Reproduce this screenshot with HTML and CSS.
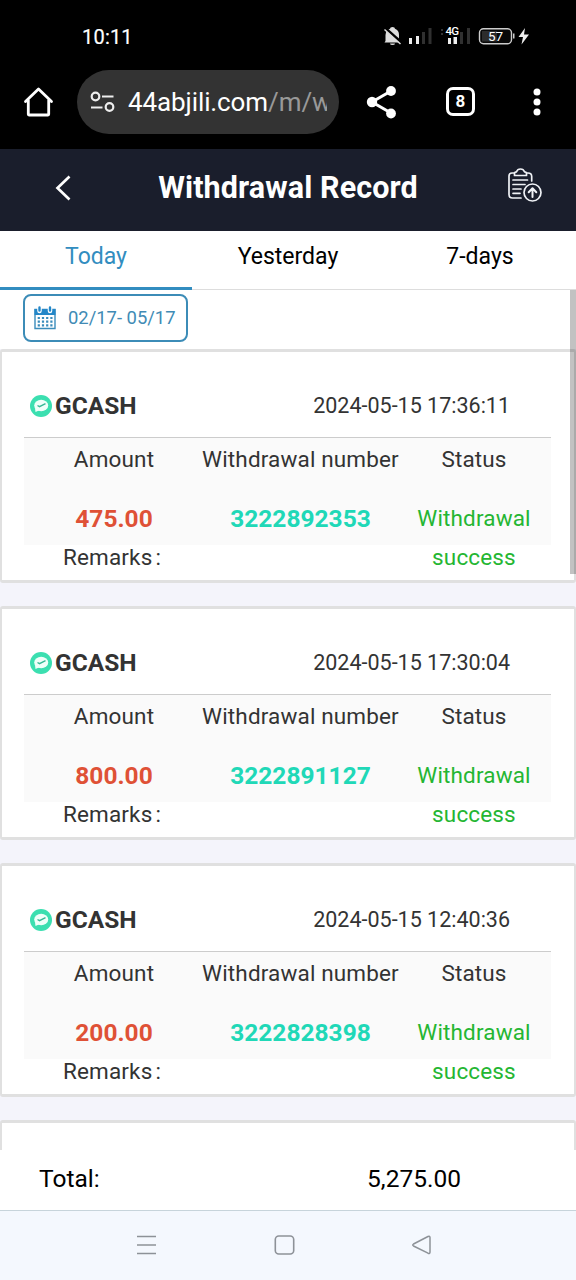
FILE: index.html
```
<!DOCTYPE html>
<html lang="en">
<head>
<meta charset="utf-8">
<title>Withdrawal Record</title>
<link rel="stylesheet" href="styles.css">
</head>
<body>
<div class="status-bar">
  <span class="clock">10:11</span>
  <svg class="status-icons" width="150" height="24" viewBox="0 0 150 24">
    <path d="M4.500 17V11Q5 5.500 9 4.700Q9 3 11.500 3Q14 3 14 4.700Q18 6 18 11V15L20 18.500H3.500Z" fill="#ddd"/>
    <path d="M9 19.500H14Q14 21 11.500 21Q9 21 9 19.500Z" fill="#ddd"/>
    <path d="M3.500 3.500L21 19" stroke="#000" stroke-width="3"/>
    <path d="M3.500 5.500L19.500 20" stroke="#ddd" stroke-width="1.500"/>
    <path d="M28 14h3v6h-3zM35 12h3v8h-3z" fill="#eee"/>
    <path d="M41 8h3v12h-3zM47.500 4h3v16h-3z" fill="#303030"/>
    <path d="M60 5h2v2h-2zM60 9h2v2h-2z" fill="#333"/>
    <path d="M67 14h3v6h-3zM72.500 13h3.500v7H72.500z" fill="#eee"/>
    <path d="M79 8h3v12h-3zM86 4h3v16h-3z" fill="#303030"/>
    <text class="net-label" x="64.500" y="11">4G</text>
    <rect x="98.500" y="4.700" width="32" height="15" rx="4" fill="#080808" stroke="#ccc" stroke-width="1.400"/>
    <path d="M101 7h15v10.500h-15z" fill="#2c2c2c"/>
    <path d="M132 9.500h1.500v5H132z" fill="#ccc"/>
    <text class="charge" x="114.500" y="16.900">57</text>
    <path d="M144 4L137.500 13H142L140.500 20.500L148 10.500H143Z" fill="#eee"/>
  </svg>
</div>
<div class="browser-bar">
  <svg class="home" width="32" height="32" viewBox="0 0 32 32" fill="none" stroke="#fff" stroke-width="2.800" stroke-linejoin="round" stroke-linecap="round"><path d="M3.500 15.500L16.500 3L29.500 15.500M6.300 14V28.300Q6.300 29 7 29H26Q26.700 29 26.700 28.300V14"/></svg>
  <div class="address">
    <svg width="26" height="22" viewBox="0 0 26 22" fill="none" stroke="#eee" stroke-width="2.200"><circle cx="5.500" cy="5.500" r="3.800"/><path d="M12 5.500H23.500M1 16.500H12.500"/><circle cx="19.500" cy="16" r="3.800"/></svg>
    <span class="url">44abjili.com<span class="path">/m/w</span></span>
  </div>
  <svg class="share" width="32" height="34" viewBox="0 0 32 34"><path d="M25 6L6 17L25 28" fill="none" stroke="#fff" stroke-width="3"/><g fill="#fff"><circle cx="25" cy="6" r="4.900"/><circle cx="6" cy="17" r="5.200"/><circle cx="25" cy="28.500" r="4.900"/></g></svg>
  <span class="tab-count">8</span>
  <svg class="more" width="8" height="28" viewBox="0 0 8 28" fill="#fff"><circle cx="4" cy="4" r="3.500"/><circle cx="4" cy="14" r="3.500"/><circle cx="4" cy="24" r="3.500"/></svg>
</div>
<header class="page-header">
  <svg class="back" width="18" height="28" viewBox="0 0 18 28" fill="none" stroke="#fff" stroke-width="2.700"><path d="M15.500 2.500L3.500 14L15.500 25.500"/></svg>
  <h1>Withdrawal Record</h1>
  <svg class="records" width="36" height="36" viewBox="0 0 36 36" fill="none" stroke="#f0f2f6" stroke-width="1.700" stroke-linecap="round" stroke-linejoin="round">
    <path d="M7 5H5Q2 5 2 8V26.500Q2 30 5.500 30H14M20 5H21Q24.700 5 24.700 8.500V13"/>
    <path d="M7.500 7.500V5.500Q7.500 4 9.500 3.800Q10.500 1 13.500 1Q16.500 1 17.500 3.800Q19.500 4 19.500 5.500V7.500Z"/>
    <path d="M6 12H20.500M6 16.500H18M6 21H14M6 25.300H13"/>
    <circle cx="25.500" cy="24.500" r="8.500"/><path d="M25.500 29V20.500M21.700 24.200L25.500 20.300L29.300 24.200" stroke-width="2"/>
  </svg>
</header>
<nav class="tabs"><span class="tab active">Today</span><span class="tab">Yesterday</span><span class="tab">7-days</span></nav>
<main class="records-list">
  <div class="filter">
    <div class="date-range">
      <svg width="22" height="24" viewBox="0 0 22 24"><path d="M1 3.500H21V22.500H1Z" fill="#fff" stroke="#3a8cbb" stroke-width="1.400"/><path d="M.5 3H21.500V9H.5Z" fill="#2487c8"/><path d="M5.500 1.500V5M16 1.500V5" stroke="#fff" stroke-width="4.500" stroke-linecap="round"/><path d="M5.500 1.500V4.500M16 1.500V4.500" stroke="#2487c8" stroke-width="2.400" stroke-linecap="round"/><path d="M3.700 12H19M3.700 15.700H19M3.700 19.400H19" stroke="#3a8cbb" stroke-width="2.200" stroke-dasharray="2.200 2"/></svg>
      <span>02/17- 05/17</span>
    </div>
  </div>
  <article class="card">
    <div class="card-head">
      <svg width="22" height="22" viewBox="0 0 22 22"><circle cx="11" cy="11" r="11" fill="#3bdfb0"/><ellipse cx="11.200" cy="10.500" rx="7" ry="5.800" fill="#effff9"/><path d="M5 13L5.500 17L10 15" fill="#effff9"/><path d="M7.500 10.500L9.500 11.700L15.500 8.700" fill="none" stroke="#35b895" stroke-width="1.400"/></svg>
      <strong>GCASH</strong><time class="when">2024-05-15 17:36:11</time>
    </div>
    <div class="grid labels"><span>Amount</span><span class="wide">Withdrawal number</span><span>Status</span></div>
    <div class="grid values"><b class="amount">475.00</b><b class="number">3222892353</b><span class="state">Withdrawal success</span></div>
    <div class="grid remarks"><span>Remarks<i>:</i></span></div>
  </article>
  <article class="card">
    <div class="card-head">
      <svg width="22" height="22" viewBox="0 0 22 22"><circle cx="11" cy="11" r="11" fill="#3bdfb0"/><ellipse cx="11.200" cy="10.500" rx="7" ry="5.800" fill="#effff9"/><path d="M5 13L5.500 17L10 15" fill="#effff9"/><path d="M7.500 10.500L9.500 11.700L15.500 8.700" fill="none" stroke="#35b895" stroke-width="1.400"/></svg>
      <strong>GCASH</strong><time class="when">2024-05-15 17:30:04</time>
    </div>
    <div class="grid labels"><span>Amount</span><span class="wide">Withdrawal number</span><span>Status</span></div>
    <div class="grid values"><b class="amount">800.00</b><b class="number">3222891127</b><span class="state">Withdrawal success</span></div>
    <div class="grid remarks"><span>Remarks<i>:</i></span></div>
  </article>
  <article class="card">
    <div class="card-head">
      <svg width="22" height="22" viewBox="0 0 22 22"><circle cx="11" cy="11" r="11" fill="#3bdfb0"/><ellipse cx="11.200" cy="10.500" rx="7" ry="5.800" fill="#effff9"/><path d="M5 13L5.500 17L10 15" fill="#effff9"/><path d="M7.500 10.500L9.500 11.700L15.500 8.700" fill="none" stroke="#35b895" stroke-width="1.400"/></svg>
      <strong>GCASH</strong><time class="when">2024-05-15 12:40:36</time>
    </div>
    <div class="grid labels"><span>Amount</span><span class="wide">Withdrawal number</span><span>Status</span></div>
    <div class="grid values"><b class="amount">200.00</b><b class="number">3222828398</b><span class="state">Withdrawal success</span></div>
    <div class="grid remarks"><span>Remarks<i>:</i></span></div>
  </article>
  <article class="card"></article>
  <div class="scrollbar"></div>
</main>
<footer class="total"><span>Total:</span><span class="sum">5,275.00</span></footer>
<div class="system-nav">
  <svg width="22" height="22" viewBox="0 0 22 22" stroke="#8d9298" stroke-width="1.700"><path d="M1 2.500H20M1 11H20M1 19.500H20"/></svg>
  <svg width="22" height="22" viewBox="0 0 22 22" fill="none" stroke="#8d9298" stroke-width="1.600"><rect x="1.300" y="2" width="18.400" height="18" rx="3.500"/></svg>
  <svg width="22" height="22" viewBox="0 0 22 22" fill="none" stroke="#8d9298" stroke-width="1.500" stroke-linejoin="round"><path d="M2.500 10L17 2.500Q19 1.600 19 3.500V18Q19 20 17 19.200L2.500 12Q1 11 2.500 10Z"/></svg>
</div>
</body>
</html>
```
FILE: styles.css
```
* { box-sizing: border-box; }
body { margin: 0; width: 576px; height: 1280px; overflow: hidden; display: flex; flex-direction: column; background: #fff; font-family: Roboto, "Liberation Sans", sans-serif; color: #000; }
svg { display: block; flex: none; }
.status-bar { height: 56px; background: #000; color: #fff; display: flex; justify-content: space-between; padding: 24px 45px 0 82px; }
.clock { font-size: 20px; line-height: 26px; font-weight: 400; letter-spacing: .2px; -webkit-text-stroke: .2px #fff; }
.net-label { font: 500 11.500px Roboto, sans-serif; fill: #fff; stroke: #000; stroke-width: 2px; paint-order: stroke; letter-spacing: -.8px; }
.charge { font: 400 13.500px Roboto, sans-serif; fill: #fff; text-anchor: middle; }
.browser-bar { height: 93px; background: #000; display: flex; align-items: flex-start; padding: 14px 0 0 22px; }
.home { margin-top: 16px; }
.address { width: 262px; height: 64px; margin-left: 23px; border-radius: 32px; background: #333; color: #fff; display: flex; align-items: center; padding: 0 12px 0 13px; }
.url { margin-left: 12px; font-size: 26px; line-height: 40px; letter-spacing: -.1px; overflow: hidden; white-space: nowrap; width: 199px; }
.path { color: #999; }
.share { margin: 15px 0 0 26.500px; }
.tab-count { width: 29px; height: 29px; margin: 17px 0 0 48.500px; border: 3px solid #fff; border-radius: 7px; color: #fff; font-size: 17px; line-height: 23px; font-weight: 700; text-align: center; }
.more { margin: 18px 0 0 58px; }
.page-header { height: 82px; background: #1a1e2c; display: flex; align-items: flex-start; padding: 0 33px 0 54px; color: #fff; }
.page-header h1 { flex: 1; text-align: center; margin: 18px 0 0 -3px; font-size: 30.500px; line-height: 42px; font-weight: 700; letter-spacing: .1px; }
.back { margin-top: 25px; }
.records { margin-top: 19px; }
.tabs { height: 59px; display: grid; grid-template-columns: repeat(3, 1fr); font-size: 23px; line-height: 30px; text-align: center; }
.tab { padding-top: 11px; border-bottom: 1px solid #ddd; }
.active { color: #328dc0; border-bottom: 3px solid #328dc0; }
.records-list { position: relative; height: 860px; overflow: hidden; background: #f4f4fb; }
.filter { height: 59px; padding: 4px 0 0 22.500px; background: #fff; }
.date-range { width: 165.500px; height: 48px; border: 2px solid #3c8cb7; border-radius: 8px; color: #418bb5; display: flex; align-items: center; padding: 0 0 1px 9px; gap: 12.500px; font-size: 18.400px; white-space: nowrap; }
.card { height: 234px; margin-bottom: 23px; padding: 35px 23px 0 22px; border: 2px solid #e0e0e0; border-top-width: 3px; border-bottom-width: 3px; border-radius: 3px; background: #fff; color: #333; font-size: 22.500px; line-height: 39px; }
.card-head { display: flex; align-items: center; height: 51px; padding: 0 0 12px 6px; border-bottom: 1px solid #ccc; }
.card-head strong { margin-left: 3px; font-size: 24.500px; padding-bottom: 2px; }
.when { margin-left: auto; margin-right: 41px; font-size: 21.500px; padding-bottom: 1px; }
.grid { display: grid; grid-template-columns: 180px 193px 154px; text-align: center; letter-spacing: .15px; }
.labels { height: 61px; padding-top: 2px; background: #fafafa; }
.values { height: 46px; background: #fafafa; }
.wide { white-space: nowrap; margin: 0 -10px; }
.amount, .number { font-size: 24.500px; letter-spacing: 0; }
.amount { color: #df5136; }
.number { color: #20d8b7; }
.state { color: #24b632; }
.remarks { line-height: 25px; }
.remarks span { padding-right: 4px; }
.remarks i { font-style: normal; margin-left: 3px; }
.scrollbar { position: absolute; right: 0; top: 0; width: 6px; height: 284px; background: rgba(0, 0, 0, .24); }
.total { height: 60px; padding: 10px 0 0 39px; background: #fff; display: flex; font-size: 24.500px; line-height: 38px; }
.sum { margin-left: auto; margin-right: 115px; }
.system-nav { height: 70px; border-top: 1px solid #c7d4db; background: #f4f8fe; display: flex; justify-content: space-between; padding: 23px 143px 0 136px; }
```
